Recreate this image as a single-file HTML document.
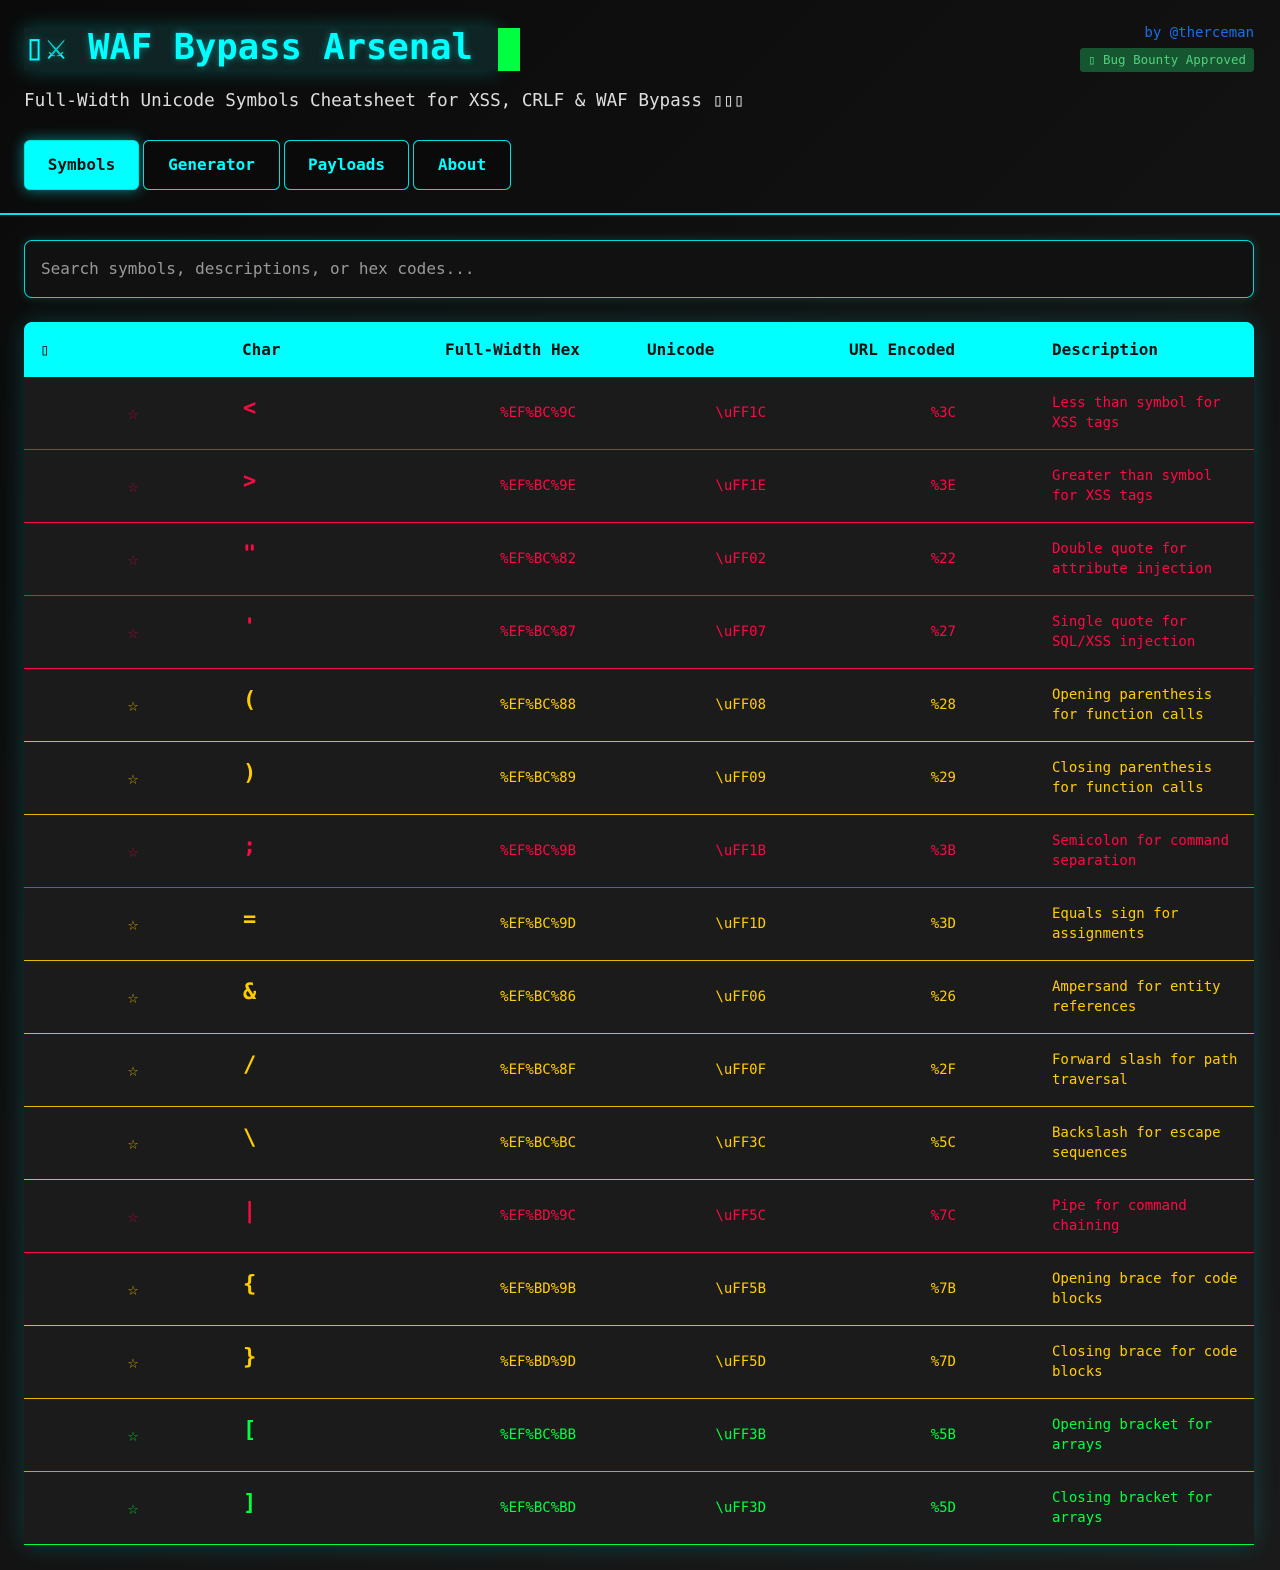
<!DOCTYPE html>
<html><head><meta charset="utf-8"><style>
*{margin:0;padding:0;box-sizing:border-box}
body{width:1280px;height:1570px;background:linear-gradient(135deg,#0a0a0a,#1a1a1a);font-family:"DejaVu Sans Mono","Liberation Mono",monospace;color:#ddd;position:relative;overflow:hidden}
.title{position:absolute;left:24px;top:28px;height:42px;background:#0f2424;box-shadow:0 0 20px rgba(0,255,255,.25);color:#00ffff;font-size:35.5px;font-weight:bold;line-height:40px;padding-left:0;width:474px;text-shadow:0 0 8px rgba(0,255,255,.4)}
.cursor{position:absolute;left:498px;top:28px;width:22px;height:43px;background:#00ff41}
.sub{position:absolute;left:24px;top:91px;font-size:17.6px;color:#ddd}
.by{position:absolute;right:26px;top:25px;font-size:14px;color:#1a6fe6}
.badge{position:absolute;right:26px;top:48px;background:#155530;color:#4fd07a;font-size:12.5px;padding:4px 8px;border-radius:3px;height:24px}
.tab{position:absolute;top:140px;height:50px;border:1px solid #00e0e0;border-radius:6px;background:#0a0a0a;color:#00ffff;font-size:16px;font-weight:bold;line-height:48px;text-align:center}
.tab.on{background:#00ffff;color:#111;box-shadow:0 0 14px rgba(0,255,255,.5)}
.hr{position:absolute;left:0;top:213px;width:1280px;height:2px;background:#00e5e5}
.search{position:absolute;left:24px;top:240px;width:1230px;height:58px;border:1px solid #00d8d8;border-radius:8px;background:#111;color:#999;font-size:16px;line-height:56px;padding-left:16px;box-shadow:0 0 10px rgba(0,255,255,.2)}
.tbl{position:absolute;left:24px;top:322px;width:1230px;background:#1b1b1b;border-radius:8px 8px 0 0;box-shadow:0 0 25px rgba(0,255,255,.18)}
.th{height:55px;background:#00ffff;border-radius:8px 8px 0 0;position:relative;color:#111;font-weight:bold;font-size:16px}
.th span{position:absolute;top:18px}
.r{height:73px;position:relative;font-size:14px}
.r span{position:absolute}
.s{left:101px;top:26px;width:16px;text-align:center;font-size:18px}
.c{left:219px;top:19px;font-size:22px;font-weight:bold}
.h{right:678px;top:28px}
.u{right:488px;top:28px}
.e{right:298px;top:28px}
.d{left:1028px;top:16px;width:186px;line-height:20px}
.R{color:#ff0844;border-bottom:1px solid #ff0844}
.Y{color:#ffcc00;border-bottom:1px solid #e8b800}
.G{color:#00ff41;border-bottom:1px solid #00ff41}
.R .s{color:#a00a30}.Y .s{color:#c9a000}.G .s{color:#00c030}
</style></head><body>
<div class="title">▯⚔ WAF Bypass Arsenal</div><div class="cursor"></div>
<div class="by">by @therceman</div>
<div class="badge">▯ Bug Bounty Approved</div>
<div class="sub">Full-Width Unicode Symbols Cheatsheet for XSS, CRLF &amp; WAF Bypass ▯▯▯</div>
<div class="tab on" style="left:24px;width:115px">Symbols</div>
<div class="tab" style="left:143px;width:137px">Generator</div>
<div class="tab" style="left:284px;width:125px">Payloads</div>
<div class="tab" style="left:413px;width:98px">About</div>
<div class="hr"></div>
<div class="search">Search symbols, descriptions, or hex codes...</div>
<div class="tbl">
<div class="th"><span style="left:16px">▯</span><span style="left:218px">Char</span><span style="left:421px">Full-Width Hex</span><span style="left:623px">Unicode</span><span style="left:825px">URL Encoded</span><span style="left:1028px">Description</span></div>
<div class="r R"><span class="s">☆</span><span class="c">&lt;</span><span class="h">%EF%BC%9C</span><span class="u">\uFF1C</span><span class="e">%3C</span><span class="d">Less than symbol for XSS tags</span></div>
<div class="r R"><span class="s">☆</span><span class="c">&gt;</span><span class="h">%EF%BC%9E</span><span class="u">\uFF1E</span><span class="e">%3E</span><span class="d">Greater than symbol for XSS tags</span></div>
<div class="r R"><span class="s">☆</span><span class="c">"</span><span class="h">%EF%BC%82</span><span class="u">\uFF02</span><span class="e">%22</span><span class="d">Double quote for attribute injection</span></div>
<div class="r R"><span class="s">☆</span><span class="c">'</span><span class="h">%EF%BC%87</span><span class="u">\uFF07</span><span class="e">%27</span><span class="d">Single quote for SQL/XSS injection</span></div>
<div class="r Y"><span class="s">☆</span><span class="c">(</span><span class="h">%EF%BC%88</span><span class="u">\uFF08</span><span class="e">%28</span><span class="d">Opening parenthesis for function calls</span></div>
<div class="r Y"><span class="s">☆</span><span class="c">)</span><span class="h">%EF%BC%89</span><span class="u">\uFF09</span><span class="e">%29</span><span class="d">Closing parenthesis for function calls</span></div>
<div class="r R" style="border-bottom-color:#0a8a8a"><span class="s">☆</span><span class="c">;</span><span class="h">%EF%BC%9B</span><span class="u">\uFF1B</span><span class="e">%3B</span><span class="d">Semicolon for command separation</span></div>
<div class="r Y"><span class="s">☆</span><span class="c">=</span><span class="h">%EF%BC%9D</span><span class="u">\uFF1D</span><span class="e">%3D</span><span class="d">Equals sign for assignments</span></div>
<div class="r Y"><span class="s">☆</span><span class="c">&amp;</span><span class="h">%EF%BC%86</span><span class="u">\uFF06</span><span class="e">%26</span><span class="d">Ampersand for entity references</span></div>
<div class="r Y"><span class="s">☆</span><span class="c">/</span><span class="h">%EF%BC%8F</span><span class="u">\uFF0F</span><span class="e">%2F</span><span class="d">Forward slash for path traversal</span></div>
<div class="r Y"><span class="s">☆</span><span class="c">\</span><span class="h">%EF%BC%BC</span><span class="u">\uFF3C</span><span class="e">%5C</span><span class="d">Backslash for escape sequences</span></div>
<div class="r R"><span class="s">☆</span><span class="c">|</span><span class="h">%EF%BD%9C</span><span class="u">\uFF5C</span><span class="e">%7C</span><span class="d">Pipe for command chaining</span></div>
<div class="r Y"><span class="s">☆</span><span class="c">{</span><span class="h">%EF%BD%9B</span><span class="u">\uFF5B</span><span class="e">%7B</span><span class="d">Opening brace for code blocks</span></div>
<div class="r Y"><span class="s">☆</span><span class="c">}</span><span class="h">%EF%BD%9D</span><span class="u">\uFF5D</span><span class="e">%7D</span><span class="d">Closing brace for code blocks</span></div>
<div class="r G"><span class="s">☆</span><span class="c">[</span><span class="h">%EF%BC%BB</span><span class="u">\uFF3B</span><span class="e">%5B</span><span class="d">Opening bracket for arrays</span></div>
<div class="r G"><span class="s">☆</span><span class="c">]</span><span class="h">%EF%BC%BD</span><span class="u">\uFF3D</span><span class="e">%5D</span><span class="d">Closing bracket for arrays</span></div>
</div>
</body></html>
